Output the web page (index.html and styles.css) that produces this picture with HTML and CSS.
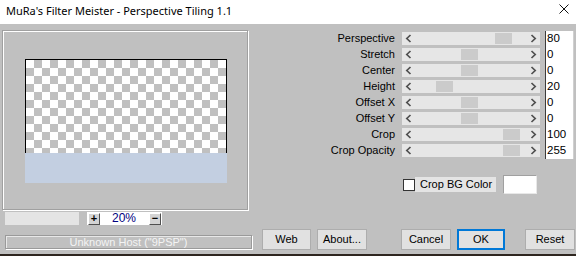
FILE: index.html
```html
<!DOCTYPE html>
<html>
<head>
<meta http-equiv="Content-Type" content="text/html; charset=utf-8"/>
<title>Perspective Tiling</title>
<link rel="stylesheet" href="styles.css">
</head>
<body>
<div class="window">
  <div class="titlebar">
    <span class="title">MuRa's Filter Meister - Perspective Tiling 1.1</span>
    <svg class="close" width="10" height="10" viewBox="0 0 10 10"><path d="M0.5 0.5 L9.5 9.5 M9.5 0.5 L0.5 9.5" stroke="#111" stroke-width="1" fill="none"/></svg>
  </div>

  <div class="main">
    <div class="left">
      <div class="preview">
        <div class="checker"></div>
        <div class="tile"></div>
      </div>
      <div class="zoom">
        <div class="zoom-bar"></div>
        <div class="zoom-ctrl">
          <span class="zbtn">+</span>
          <span class="zval">20%</span>
          <span class="zbtn">&minus;</span>
        </div>
      </div>
    </div>

    <div class="right">
      <div class="sliders">
        <span class="label">Perspective</span>
        <div class="track"><svg class="arrow" width="7" height="9" viewBox="0 0 7 9"><polyline points="5.5,1 1.8,4.5 5.5,8" /></svg><div class="channel"><div class="thumb" style="margin-left:76px"></div></div><svg class="arrow" width="7" height="9" viewBox="0 0 7 9"><polyline points="1.5,1 5.2,4.5 1.5,8" /></svg></div>
        <span class="value">80</span>

        <span class="label">Stretch</span>
        <div class="track"><svg class="arrow" width="7" height="9" viewBox="0 0 7 9"><polyline points="5.5,1 1.8,4.5 5.5,8" /></svg><div class="channel"><div class="thumb" style="margin-left:42px"></div></div><svg class="arrow" width="7" height="9" viewBox="0 0 7 9"><polyline points="1.5,1 5.2,4.5 1.5,8" /></svg></div>
        <span class="value">0</span>

        <span class="label">Center</span>
        <div class="track"><svg class="arrow" width="7" height="9" viewBox="0 0 7 9"><polyline points="5.5,1 1.8,4.5 5.5,8" /></svg><div class="channel"><div class="thumb" style="margin-left:42px"></div></div><svg class="arrow" width="7" height="9" viewBox="0 0 7 9"><polyline points="1.5,1 5.2,4.5 1.5,8" /></svg></div>
        <span class="value">0</span>

        <span class="label">Height</span>
        <div class="track"><svg class="arrow" width="7" height="9" viewBox="0 0 7 9"><polyline points="5.5,1 1.8,4.5 5.5,8" /></svg><div class="channel"><div class="thumb" style="margin-left:17px"></div></div><svg class="arrow" width="7" height="9" viewBox="0 0 7 9"><polyline points="1.5,1 5.2,4.5 1.5,8" /></svg></div>
        <span class="value">20</span>

        <span class="label">Offset X</span>
        <div class="track"><svg class="arrow" width="7" height="9" viewBox="0 0 7 9"><polyline points="5.5,1 1.8,4.5 5.5,8" /></svg><div class="channel"><div class="thumb" style="margin-left:42px"></div></div><svg class="arrow" width="7" height="9" viewBox="0 0 7 9"><polyline points="1.5,1 5.2,4.5 1.5,8" /></svg></div>
        <span class="value">0</span>

        <span class="label">Offset Y</span>
        <div class="track"><svg class="arrow" width="7" height="9" viewBox="0 0 7 9"><polyline points="5.5,1 1.8,4.5 5.5,8" /></svg><div class="channel"><div class="thumb" style="margin-left:42px"></div></div><svg class="arrow" width="7" height="9" viewBox="0 0 7 9"><polyline points="1.5,1 5.2,4.5 1.5,8" /></svg></div>
        <span class="value">0</span>

        <span class="label">Crop</span>
        <div class="track"><svg class="arrow" width="7" height="9" viewBox="0 0 7 9"><polyline points="5.5,1 1.8,4.5 5.5,8" /></svg><div class="channel"><div class="thumb" style="margin-left:84px"></div></div><svg class="arrow" width="7" height="9" viewBox="0 0 7 9"><polyline points="1.5,1 5.2,4.5 1.5,8" /></svg></div>
        <span class="value">100</span>

        <span class="label">Crop Opacity</span>
        <div class="track"><svg class="arrow" width="7" height="9" viewBox="0 0 7 9"><polyline points="5.5,1 1.8,4.5 5.5,8" /></svg><div class="channel"><div class="thumb" style="margin-left:84px"></div></div><svg class="arrow" width="7" height="9" viewBox="0 0 7 9"><polyline points="1.5,1 5.2,4.5 1.5,8" /></svg></div>
        <span class="value">255</span>
      </div>

      <div class="bgrow">
        <span class="check"></span>
        <span class="check-label">Crop BG Color</span>
        <span class="swatch"></span>
      </div>
    </div>
  </div>

  <div class="footer">
    <div class="status">Unknown Host ("9PSP")</div>
    <span class="btn btn-web">Web</span>
    <span class="btn btn-about">About...</span>
    <span class="btn btn-cancel">Cancel</span>
    <span class="btn btn-ok">OK</span>
    <span class="btn btn-reset">Reset</span>
  </div>
  <div class="edge"></div>
</div>
</body>
</html>
```

FILE: styles.css
```css
body {
  margin: 0;
  background-color: #c0c0c0;
  font-family: "Liberation Sans", Arial, sans-serif;
  font-size: 11px;
}

.window {
  width: 576px;
  height: 256px;
  display: flex;
  flex-direction: column;
  overflow: hidden;
}

/* title bar */
.titlebar {
  height: 24px;
  background-color: #fff;
  display: flex;
  justify-content: space-between;
  align-items: flex-start;
}

.title {
  font-family: "Noto Sans", sans-serif;
  font-size: 11px;
  line-height: 21px;
  padding-left: 6px;
  color: #000;
}

.close {
  margin-top: 4px;
  margin-right: 7px;
}

/* main area */
.main {
  height: 205px;
  display: flex;
}

.left {
  width: 252px;
  padding-left: 2px;
  box-sizing: border-box;
}

.preview {
  margin-top: 6px;
  width: 246px;
  height: 180px;
  box-sizing: border-box;
  border: 1px solid #a0a0a0;
  box-shadow: inset 1px 1px 0 #fff, 1px 1px 0 #fff;
  padding: 28px 0 0 22px;
}

.checker {
  width: 202px;
  height: 94px;
  box-sizing: border-box;
  border: 1px solid #000;
  border-bottom: none;
  background: repeating-conic-gradient(#c0c0c0 0 25%, #fff 0 50%) 0 0 / 16px 16px;
}

.tile {
  width: 202px;
  height: 30px;
  background-color: #c3cfe1;
}

.zoom {
  margin-top: 2px;
  height: 13px;
  display: flex;
}

.zoom-bar {
  margin-left: 3px;
  width: 74px;
  background-color: #e4e4e4;
}

.zoom-ctrl {
  margin-left: 8px;
  width: 75px;
  background-color: #fff;
  display: flex;
  align-items: center;
}

.zbtn {
  width: 12px;
  height: 12px;
  box-sizing: border-box;
  margin-left: 1px;
  background-color: #d4d4d4;
  border: 1px solid;
  border-color: #fff #505050 #505050 #fff;
  font-size: 11px;
  font-weight: bold;
  line-height: 9px;
  text-align: center;
  color: #000;
}

.zval {
  width: 48px;
  text-align: center;
  color: #000080;
  font-size: 12px;
  line-height: 13px;
}

/* sliders */
.right {
  width: 324px;
}

.sliders {
  margin-top: 7px;
  display: grid;
  grid-template-columns: 150px 143px 29px;
  grid-auto-rows: 16px;
}

.label {
  text-align: right;
  padding-right: 7px;
  line-height: 15px;
  color: #000;
}

.track {
  margin: 1px 5px 2px 0;
  background-color: #e6e6e6;
  display: flex;
  align-items: center;
}

.arrow {
  width: 17px;
  flex: none;
  box-sizing: border-box;
}

.arrow:first-child {
  padding-left: 3px;
  padding-right: 7px;
}

.arrow:last-child {
  padding-left: 7px;
  padding-right: 3px;
}

.arrow polyline {
  fill: none;
  stroke: #505050;
  stroke-width: 1.7;
}

.channel {
  flex: 1;
  height: 11px;
  display: flex;
}

.thumb {
  width: 17px;
  height: 11px;
  background-color: #cbcbcb;
}

.value {
  background-color: #fff;
  border-left: 1px solid #3c3c3c;
  border-right: 1px solid #d0d0d0;
  padding-left: 1px;
  font-size: 11.5px;
  line-height: 15px;
  color: #000;
}

.bgrow {
  margin-top: 16px;
  padding-left: 151px;
  height: 19px;
  display: flex;
  align-items: center;
}

.check {
  width: 12px;
  height: 12px;
  box-sizing: border-box;
  border: 1px solid #333;
  background-color: #fff;
}

.check-label {
  height: 15px;
  width: 81px;
  box-sizing: border-box;
  padding-left: 5px;
  background-color: #e4e4e4;
  line-height: 15px;
  color: #000;
}

.swatch {
  margin-left: 7px;
  width: 34px;
  height: 19px;
  box-sizing: border-box;
  background-color: #fff;
  border: 1px solid;
  border-color: #a0a0a0 #e8e8e8 #e8e8e8 #a0a0a0;
}

/* footer */
.footer {
  height: 21px;
  display: flex;
}

.status {
  align-self: flex-end;
  margin: 0 0 1px 5px;
  width: 247px;
  height: 14px;
  box-sizing: border-box;
  border: 1px solid #9a9a9a;
  box-shadow: 1px 1px 0 #fff, inset 1px 1px 0 #e8e8e8;
  color: #f4f4f4;
  text-align: center;
  line-height: 12px;
}

.btn {
  height: 21px;
  box-sizing: border-box;
  border: 1px solid #adadad;
  background-color: #e1e1e1;
  text-align: center;
  line-height: 19px;
  color: #000;
}

.btn-web { margin-left: 10px; width: 49px; }
.btn-about { margin-left: 6px; width: 50px; }
.btn-cancel { margin-left: 34px; width: 50px; }
.btn-ok { margin-left: 6px; width: 48px; border: 2px solid #0078d7; line-height: 17px; }
.btn-reset { margin-left: 20px; width: 50px; }

.edge {
  margin-top: 4px;
  height: 2px;
  background-color: #2e2620;
}
```
